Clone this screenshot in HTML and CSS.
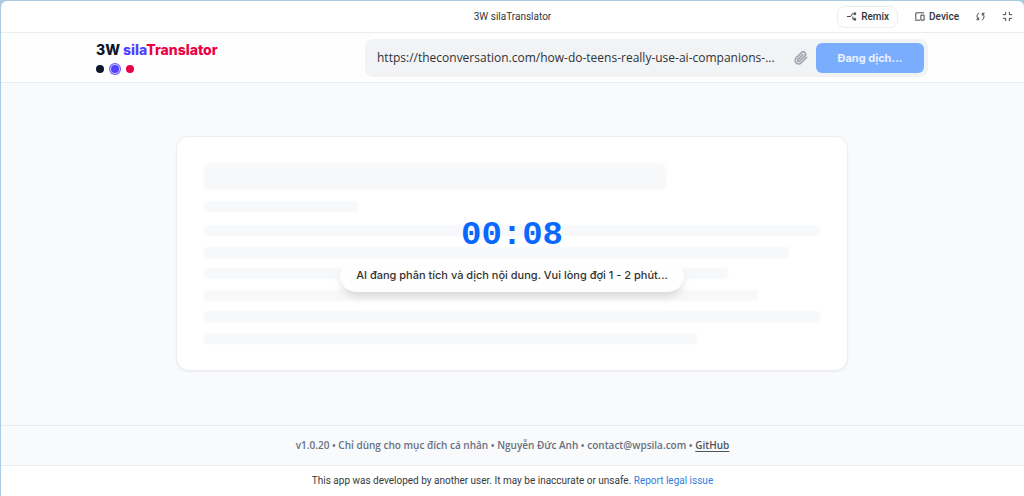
FILE: index.html
```html
<!DOCTYPE html>
<html lang="vi">
  <head>
    <meta charset="UTF-8" />
    <meta name="viewport" content="width=device-width, initial-scale=1.0" />
    <title>3W silaTranslator</title>
    <link rel="stylesheet" href="styles.css">
  </head>
  <body>
    <div class="window">
      <!-- Preview toolbar -->
      <div class="toolbar">
        <span class="toolbar-title">3W silaTranslator</span>
        <div class="toolbar-actions">
          <button class="tool-btn remix-btn">
            <svg class="icon" viewBox="0 0 12 12">
              <path d="M1 6h4l2-3h2M7.500 6v3H9" />
              <path d="M9 2h1.500v2H9zM9 8h1.500v2H9z" />
            </svg>
            Remix
          </button>
          <button class="tool-btn">
            <svg class="icon" viewBox="0 0 12 12">
              <path d="M11 2H2v7M1 10h5.500M7.500 4.500h3.500v5.500H7.500z" />
            </svg>
            Device
          </button>
          <button class="tool-btn icon-btn" aria-label="Reload">
            <svg class="icon" viewBox="0 0 12 12">
              <path d="M4.500 2C1.800 3.500 1.500 7 3.600 9.300M1.500 9.500h2.500V7M7.500 10C10.200 8.500 10.500 5 8.400 2.700M10.500 2.500H8V5" />
            </svg>
          </button>
          <button class="tool-btn icon-btn" aria-label="Exit full screen">
            <svg class="icon" viewBox="0 0 12 12">
              <path d="M4 1v3H1M8 1v3h3M4 11V8H1M8 11V8h3" />
            </svg>
          </button>
        </div>
      </div>

      <!-- Header -->
      <header class="header">
        <div class="header-inner">
          <div class="brand">
            <h1 class="logo">3W <span class="logo-sila">sila</span><span class="logo-name">Translator</span></h1>
            <div class="themes">
              <button class="dot dot-dark" aria-label="Dark"></button>
              <button class="dot dot-indigo active" aria-label="Indigo"></button>
              <button class="dot dot-rose" aria-label="Rose"></button>
            </div>
          </div>
          <form class="search">
            <input class="url-input" type="text" aria-label="URL" value="https://theconversation.com/how-do-teens-really-use-ai-companions-..." />
            <button class="attach-btn" type="button" aria-label="Attach file">
              <svg class="clip" viewBox="0 0 24 24">
                <path d="M21.400 11.100l-9.200 9.200a6 6 0 0 1-8.500-8.500l9.200-9.200a4 4 0 0 1 5.700 5.700l-9.200 9.200a2 2 0 0 1-2.800-2.800l8.500-8.500" />
              </svg>
            </button>
            <button class="translate-btn" type="button">Đang dịch...</button>
          </form>
        </div>
      </header>

      <!-- Content -->
      <main class="main">
        <section class="card">
          <div class="skeleton">
            <div class="bar bar-title"></div>
            <div class="bar w-25"></div>
            <div class="lines">
              <div class="bar w-100"></div>
              <div class="bar w-95"></div>
              <div class="bar w-85"></div>
              <div class="bar w-90"></div>
              <div class="bar w-100"></div>
              <div class="bar w-80"></div>
            </div>
          </div>
          <div class="loading">
            <div class="timer">00:08</div>
            <p class="status">AI đang phân tích và dịch nội dung. Vui lòng đợi 1 - 2 phút...</p>
          </div>
        </section>
      </main>

      <footer class="footer">
        v1.0.20 • Chỉ dùng cho mục đích cá nhân • Nguyễn Đức Anh • contact@wpsila.com • <a href="#">GitHub</a>
      </footer>

      <div class="notice">
        This app was developed by another user. It may be inaccurate or unsafe. <a href="#">Report legal issue</a>
      </div>
    </div>
  </body>
</html>
```
FILE: styles.css
```css
* {
  box-sizing: border-box;
}
body {
  margin: 0;
  background: #a9cce0;
  font-family: Inter, "Noto Sans", sans-serif;
}
button {
  border: none;
  padding: 0;
  background: none;
  font-family: inherit;
  cursor: pointer;
}
.window {
  display: flex;
  flex-direction: column;
  min-height: calc(100vh - 1px);
  margin: 1px 0 0 1px;
  background: #fff;
  border-radius: 6px 6px 0 0;
  overflow: hidden;
}

/* Toolbar */
.toolbar {
  display: grid;
  grid-template-columns: 1fr auto 1fr;
  align-items: center;
  height: 32px;
  padding: 0 11px;
  border-bottom: 1px solid #eaecef;
  color: #34363a;
  font-family: Roboto, sans-serif;
}
.toolbar-title {
  grid-column: 2;
  font-size: 10px;
}
.toolbar-actions {
  display: flex;
  justify-content: flex-end;
  align-items: center;
  gap: 16px;
}
.tool-btn {
  display: flex;
  align-items: center;
  gap: 4px;
  color: #34363a;
  font-size: 10px;
  font-weight: 500;
}
.remix-btn {
  height: 22px;
  padding: 0 8px;
  border: 1px solid #eceef0;
  border-radius: 8px;
}
.icon-btn {
  width: 11px;
}
.icon {
  width: 11px;
  height: 11px;
  fill: none;
  stroke: currentColor;
  stroke-width: 1;
}

/* Header */
.header {
  padding: 0 96px 0 95px;
  background: #fefeff;
  border-bottom: 1px solid #e9ecf0;
}
.header-inner {
  display: flex;
  justify-content: space-between;
  align-items: center;
  height: 49px;
}
.logo {
  margin: 0;
  color: #0f172b;
  font-size: 14px;
  font-weight: 800;
  line-height: 18px;
}
.logo-sila {
  color: #5340ff;
}
.logo-name {
  color: #ec0044;
}
.themes {
  display: flex;
  align-items: center;
  gap: 7px;
  height: 12px;
  margin-top: 4px;
}
.dot {
  width: 8px;
  height: 8px;
  border-radius: 50%;
}
.dot-dark {
  background: #0f172b;
}
.dot-indigo {
  background: #5340ff;
}
.dot-rose {
  background: #ec0044;
}
.dot.active {
  box-shadow: 0 0 0 1px #c9c4ff, 0 0 0 2px #6a5bfa;
}
.search {
  display: flex;
  align-items: center;
  width: 563px;
  max-width: 75%;
  height: 38px;
  padding: 0 4px 0 12px;
  background: #f2f3f5;
  border-radius: 8px;
}
.url-input {
  flex: 1;
  min-width: 0;
  padding: 0;
  border: none;
  outline: none;
  background: none;
  color: #303236;
  font-family: "Open Sans", sans-serif;
  font-size: 12px;
  text-overflow: ellipsis;
}
.attach-btn {
  display: flex;
  margin: 0 8px;
}
.clip {
  width: 14px;
  height: 14px;
  fill: none;
  stroke: #a3a8b1;
  stroke-width: 3;
  stroke-linecap: round;
}
.translate-btn {
  width: 108px;
  height: 30px;
  background: #7badff;
  border-radius: 6px;
  color: #e8f1ff;
  font-size: 11px;
  font-weight: 700;
}

/* Content */
.main {
  flex: 1;
  padding: 53px 176px 53px 175px;
  background: #f8fafc;
}
.card {
  display: grid;
  height: 235px;
  padding: 26px 27px;
  background: #fff;
  border: 1px solid #eceef1;
  border-radius: 13px;
  box-shadow: 0 1px 2px rgba(0, 0, 0, 0.06);
}
.skeleton,
.loading {
  grid-area: 1 / 1;
}
.skeleton {
  display: flex;
  flex-direction: column;
  filter: blur(1px);
}
.bar {
  height: 11px;
  background: #f7f8fa;
  border-radius: 3px;
}
.bar-title {
  width: 75%;
  height: 27px;
  margin-bottom: 11px;
  border-radius: 6px;
}
.lines {
  flex: 1;
  display: flex;
  flex-direction: column;
  justify-content: space-between;
  margin-top: 13px;
}
.w-25 {
  width: 25%;
}
.w-80 {
  width: 80%;
}
.w-85 {
  width: 85%;
}
.w-90 {
  width: 90%;
}
.w-95 {
  width: 95%;
}
.w-100 {
  width: 100%;
}
.loading {
  display: flex;
  flex-direction: column;
  justify-content: center;
  align-items: center;
  z-index: 1;
}
.timer {
  color: #0b68ff;
  font-family: "Liberation Mono", monospace;
  font-size: 34px;
  font-weight: 700;
  line-height: 40px;
}
.status {
  margin: 4px 0 0;
  padding: 8px 16px;
  background: #fefefe;
  border-radius: 17px;
  box-shadow: 0 6px 10px -2px rgba(0, 0, 0, 0.14);
  color: #333;
  font-size: 11px;
  font-weight: 500;
  line-height: 17px;
}

/* Footer */
.footer {
  padding: 11px 16px;
  background: #f8fafc;
  border-top: 1px solid #e9ecf0;
  border-bottom: 1px solid #e9ecf0;
  color: #69717f;
  font-family: "Open Sans", sans-serif;
  font-size: 10px;
  font-weight: 600;
  line-height: 17px;
  text-align: center;
}
.footer a {
  color: #50545c;
  text-underline-offset: 2px;
}
.notice {
  padding: 7px 16px;
  color: #37393d;
  font-family: Roboto, sans-serif;
  font-size: 10px;
  line-height: 16px;
  text-align: center;
}
.notice a {
  color: #2f7de1;
  text-decoration: none;
}
```
